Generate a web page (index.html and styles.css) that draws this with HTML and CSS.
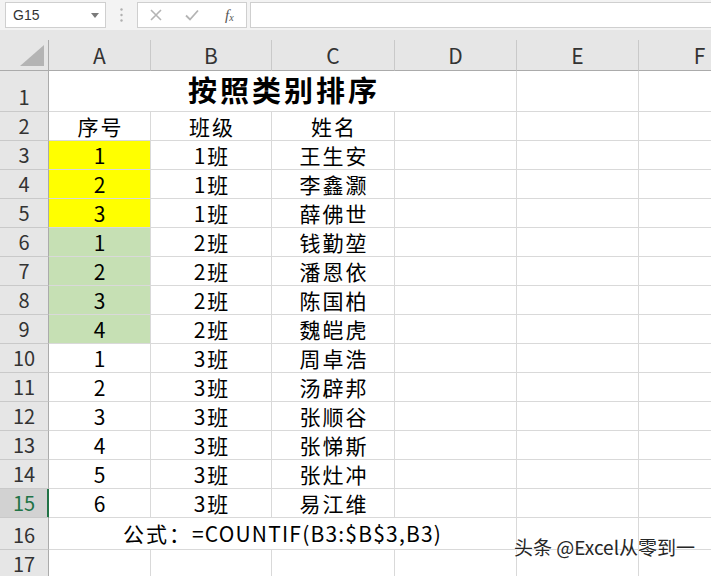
FILE: index.html
```html
<!DOCTYPE html>
<html lang="zh-CN">
<head>
<meta charset="utf-8">
<title>按照类别排序</title>
<link rel="stylesheet" href="styles.css">
</head>
<body>
<div class="toolbar">
  <div class="namebox">
    <span>G15</span>
    <svg class="caret" width="8" height="5" viewBox="0 0 8 5"><path d="M0 0H8L4 5Z" fill="#7a7a7a"/></svg>
  </div>
  <div class="grip">
    <svg width="3" height="14" viewBox="0 0 3 14"><circle cx="1.5" cy="1.5" r="1.2" fill="#b0b0b0"/><circle cx="1.5" cy="7" r="1.2" fill="#b0b0b0"/><circle cx="1.5" cy="12.5" r="1.2" fill="#b0b0b0"/></svg>
  </div>
  <div class="fbtns">
    <svg class="btn" width="12" height="12" viewBox="0 0 12 12"><path d="M1 1L11 11M11 1L1 11" stroke="#b4b4b4" stroke-width="1.6" fill="none"/></svg>
    <svg class="btn" width="14" height="12" viewBox="0 0 14 12"><path d="M1 6.5L5 10.5L13 1.5" stroke="#b4b4b4" stroke-width="1.8" fill="none"/></svg>
    <span class="fx">f<sub>x</sub></span>
  </div>
  <div class="finput"></div>
</div>
<div class="band"></div>
<div class="grid">
  <div class="corner"><svg width="48" height="30" viewBox="0 0 48 30"><path d="M20 26H44V5Z" fill="#b4b4b4"/></svg></div>
  <div class="ch">A</div><div class="ch">B</div><div class="ch">C</div><div class="ch">D</div><div class="ch">E</div><div class="ch">F</div>

  <div class="rh">1</div><div class="c title">按照类别排序</div><div class="c"></div><div class="c"></div>

  <div class="rh">2</div><div class="c zh">序号</div><div class="c zh">班级</div><div class="c zh">姓名</div><div class="c"></div><div class="c"></div><div class="c"></div>

  <div class="rh">3</div><div class="c y">1</div><div class="c zh">1班</div><div class="c zh">王生安</div><div class="c"></div><div class="c"></div><div class="c"></div>
  <div class="rh">4</div><div class="c y">2</div><div class="c zh">1班</div><div class="c zh">李鑫灏</div><div class="c"></div><div class="c"></div><div class="c"></div>
  <div class="rh">5</div><div class="c y">3</div><div class="c zh">1班</div><div class="c zh">薛佛世</div><div class="c"></div><div class="c"></div><div class="c"></div>
  <div class="rh">6</div><div class="c g">1</div><div class="c zh">2班</div><div class="c zh">钱勤堃</div><div class="c"></div><div class="c"></div><div class="c"></div>
  <div class="rh">7</div><div class="c g">2</div><div class="c zh">2班</div><div class="c zh">潘恩依</div><div class="c"></div><div class="c"></div><div class="c"></div>
  <div class="rh">8</div><div class="c g">3</div><div class="c zh">2班</div><div class="c zh">陈国柏</div><div class="c"></div><div class="c"></div><div class="c"></div>
  <div class="rh">9</div><div class="c g">4</div><div class="c zh">2班</div><div class="c zh">魏皑虎</div><div class="c"></div><div class="c"></div><div class="c"></div>
  <div class="rh">10</div><div class="c">1</div><div class="c zh">3班</div><div class="c zh">周卓浩</div><div class="c"></div><div class="c"></div><div class="c"></div>
  <div class="rh">11</div><div class="c">2</div><div class="c zh">3班</div><div class="c zh">汤辟邦</div><div class="c"></div><div class="c"></div><div class="c"></div>
  <div class="rh">12</div><div class="c">3</div><div class="c zh">3班</div><div class="c zh">张顺谷</div><div class="c"></div><div class="c"></div><div class="c"></div>
  <div class="rh">13</div><div class="c">4</div><div class="c zh">3班</div><div class="c zh">张悌斯</div><div class="c"></div><div class="c"></div><div class="c"></div>
  <div class="rh">14</div><div class="c">5</div><div class="c zh">3班</div><div class="c zh">张灶冲</div><div class="c"></div><div class="c"></div><div class="c"></div>
  <div class="rh sel">15</div><div class="c">6</div><div class="c zh">3班</div><div class="c zh">易江维</div><div class="c"></div><div class="c"></div><div class="c"></div>

  <div class="rh">16</div><div class="c formula"><span class="zh">公式：</span><span class="expr">=COUNTIF(B3:$B$3,B3)</span></div><div class="c"></div><div class="c"></div>
  <div class="rh">17</div><div class="c"></div><div class="c"></div><div class="c"></div><div class="c"></div><div class="c"></div><div class="c"></div>
</div>
<div class="watermark">头条 @Excel从零到一</div>
</body>
</html>
```
FILE: styles.css
```css
html, body {
  margin: 0;
  padding: 0;
}
body {
  width: 711px;
  height: 576px;
  overflow: hidden;
  position: relative;
  background: #fff;
  font-family: "Noto Sans CJK SC", "Noto Sans", sans-serif;
  color: #000;
}

/* formula bar */
.toolbar {
  height: 30px;
  background: #f3f3f3;
  display: flex;
  align-items: flex-start;
  padding-top: 2px;
  box-sizing: border-box;
}
.namebox {
  margin-left: 5px;
  width: 101px;
  height: 26px;
  box-sizing: border-box;
  border: 1px solid #cfcfcf;
  background: #fff;
  display: flex;
  align-items: center;
  justify-content: space-between;
  padding: 0 6px 0 7px;
  font-family: "Liberation Sans", sans-serif;
  font-size: 14px;
  color: #333;
}
.grip {
  width: 31px;
  height: 26px;
  display: flex;
  align-items: center;
  justify-content: center;
}
.fbtns {
  width: 110px;
  height: 26px;
  box-sizing: border-box;
  border: 1px solid #cfcfcf;
  background: #fff;
  display: flex;
  align-items: center;
  padding-left: 12px;
}
.fbtns .btn:nth-child(2) {
  margin-left: 23px;
}
.fx {
  margin-left: 26px;
  font-family: "Liberation Serif", serif;
  font-style: italic;
  font-size: 15px;
  color: #555;
  line-height: 1;
}
.fx sub {
  font-size: 10px;
  vertical-align: -1px;
}
.finput {
  margin-left: 3px;
  flex: 1;
  height: 26px;
  box-sizing: border-box;
  border: 1px solid #cfcfcf;
  border-right: none;
  background: #fff;
}
.band {
  height: 10px;
  background: #e6e6e6;
}

/* sheet grid */
.grid {
  display: grid;
  grid-template-columns: 49px 102px 121px 123px 122px 122px 122px;
  grid-template-rows: 31px 41px repeat(14, 29px) 32px 29px;
  width: 761px;
}
.corner {
  background: #e6e6e6;
  border-right: 1px solid #ababab;
  border-bottom: 1px solid #ababab;
  box-sizing: border-box;
}
.corner svg {
  display: block;
}
.ch {
  background: #e6e6e6;
  border-right: 1px solid #c9c9c9;
  border-bottom: 1px solid #ababab;
  box-sizing: border-box;
  text-align: center;
  font-size: 21px;
  line-height: 30px;
  color: #333;
}
.rh {
  background: #e6e6e6;
  border-right: 1px solid #ababab;
  border-bottom: 1px solid #c9c9c9;
  box-sizing: border-box;
  display: flex;
  align-items: flex-end;
  justify-content: center;
  font-size: 20px;
  line-height: 28px;
  color: #333;
}
.rh.sel {
  background: #d2d2d2;
  color: #217346;
  border-right-color: #217346;
  box-shadow: inset -1px 0 0 #217346;
}
.c {
  border-right: 1px solid #d9d9d9;
  border-bottom: 1px solid #d9d9d9;
  box-sizing: border-box;
  text-align: center;
  font-size: 21px;
  line-height: 28px;
  white-space: nowrap;
}
.zh {
  letter-spacing: 2px;
  padding-left: 2px;
}
.y {
  background: #ffff00;
}
.g {
  background: #c6e0b4;
}
.title {
  grid-column: span 4;
  font-size: 29px;
  font-weight: bold;
  letter-spacing: 3px;
  padding-left: 3px;
  line-height: 28px;
  padding-top: 4px;
}
.formula {
  grid-column: span 4;
  line-height: 31px;
}
.formula .zh {
  padding-left: 0;
}
.expr {
  letter-spacing: 1.2px;
}

/* watermark overlay */
.watermark {
  position: absolute;
  left: 514px;
  top: 536px;
  font-size: 19px;
  line-height: 22px;
  color: #262626;
  text-shadow: 0 0 2px #fff, 0 0 2px #fff;
  white-space: nowrap;
}
```
